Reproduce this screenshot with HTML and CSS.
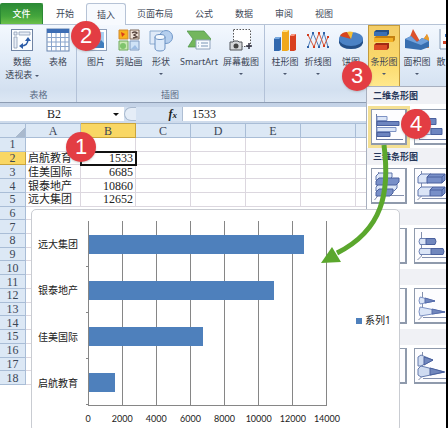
FILE: index.html
```html
<!DOCTYPE html>
<html lang="zh-CN">
<head>
<meta charset="utf-8">
<title>插入条形图</title>
<link rel="stylesheet" href="styles.css">
</head>
<body>
<div class="app">
  <nav class="tabs">
    <button class="tab file">文件</button>
    <button class="tab">开始</button>
    <button class="tab active">插入</button>
    <button class="tab wide">页面布局</button>
    <button class="tab">公式</button>
    <button class="tab">数据</button>
    <button class="tab">审阅</button>
    <button class="tab">视图</button>
  </nav>

  <section class="ribbon">
    <div class="group tables">
      <div class="tools">
        <button class="tool w42">
          <svg width="24" height="24" viewBox="0 0 24 24"><rect x="1.500" y="1.500" width="21" height="21" fill="#fbfdff" stroke="#7084a4"/><path d="M4 4h3v3H4zM9 4h11v3H9zM4 9h3v11H4z" fill="#e8eef7" stroke="#8d9cb5" stroke-width=".8"/><path d="M11 18c5 0 7-2 7-7" fill="none" stroke="#2b5ca8" stroke-width="1.500"/><path d="M15 13l3-4 3 4zM13 15l-4 3 4 3z" fill="#2b5ca8"/></svg>
          <span>数据<br>透视表 <i class="caret"></i></span>
        </button>
        <button class="tool w30">
          <svg width="24" height="24" viewBox="0 0 24 24"><rect x="1" y="1" width="22" height="22" fill="#fff" stroke="#6683ae"/><path d="M1 1h22v4H1z" fill="#3d6eb5"/><path d="M1 9.500h22M1 14h22M1 18.500h22M5.500 5v18M10 5v18M14.500 5v18M19 5v18" stroke="#8aa5cc"/></svg>
          <span>表格</span>
        </button>
      </div>
      <div class="caption">表格</div>
    </div>
    <div class="group pictures">
      <div class="tools">
        <button class="tool w32">
          <svg width="24" height="24" viewBox="0 0 24 24"><rect x="1.500" y="1.500" width="21" height="21" fill="#fff" stroke="#8fa0ba"/><path d="M4 4h16v16H4z" fill="#a9d1f4"/><path d="M4 20v-5l6-5 5 5 2-3 3 3v5z" fill="#3f7dbd"/></svg>
          <span>图片</span>
        </button>
        <button class="tool w34">
          <svg width="24" height="24" viewBox="0 0 24 24"><path d="M2 2h9v9H2z" fill="#f8b31d" stroke="#d28a31"/><path d="M4 4l4 2-3 3z" fill="#d83d1c"/><path d="M13 2h9v9h-9z" fill="#f2e6dc" stroke="#7d6654"/><path d="M15 5q3-2 5 0l-3 2 3 2-4 1" fill="none" stroke="#594740" stroke-width="1.500"/><path d="M2 13h9v9H2z" fill="#c9e8b3" stroke="#6fa95b"/><circle cx="6" cy="18" r="3" fill="#7fc46c"/><path d="M13 13h9v9h-9z" fill="#cfe3f7" stroke="#809bc0"/><path d="M14 21l4-4 3 4z" fill="#9dbde4"/></svg>
          <span>剪贴画</span>
        </button>
        <button class="tool w30">
          <svg width="24" height="24" viewBox="0 0 24 24"><path d="M1 3h13v13H1z" fill="#dfeaf8" stroke="#8daccf"/><circle cx="17" cy="9" r="6.500" fill="#b5cfee" stroke="#7299c9"/><path d="M6 9v11q0 3 5 3t5-3V9z" fill="#dceafa" stroke="#6b91c2"/><ellipse cx="11" cy="9" rx="5" ry="2.500" fill="#f5faff" stroke="#6b91c2"/></svg>
          <span>形状<i class="caret below"></i></span>
        </button>
        <button class="tool w46">
          <svg width="24" height="24" viewBox="0 0 24 24"><path d="M0 3h17l7 8-6 8H1l5-8z" fill="#73b65d" stroke="#4c9447" stroke-width=".7"/><path d="M9 12h14v9H9z" fill="#f7fbff" stroke="#91a4bd"/><path d="M11 15h1m2 0h7M11 18h1m2 0h7" stroke="#7995b5"/></svg>
          <span>SmartArt</span>
        </button>
        <button class="tool w38">
          <svg width="24" height="24" viewBox="0 0 24 24"><path d="M4.500 1.500h17v17h-17z" fill="#fff" stroke="#555" stroke-dasharray="1.500 1.500"/><path d="M20 15v6M17 18h6" stroke="#334" stroke-width="1.500"/><path d="M1 14h3l1-1h4l1 1h3v8H1z" fill="#d5d7da" stroke="#52565c"/><circle cx="7" cy="18" r="2.500" fill="#444"/></svg>
          <span>屏幕截图<i class="caret below"></i></span>
        </button>
      </div>
      <div class="caption">插图</div>
    </div>
    <div class="group charts">
      <div class="tools">
        <button class="tool w32">
          <svg width="24" height="24" viewBox="0 0 24 24"><path d="M1 11l2-2h5v13l-2 1H1z" fill="#3268ae"/><path d="M1 11l2-2h5l-2 2z" fill="#78a9df"/><path d="M9 4l2-2h5v20l-2 1H9z" fill="#f0a81b"/><path d="M9 4l2-2h5l-2 2z" fill="#ffe18a"/><path d="M17 8l2-2h4v16l-2 1h-4z" fill="#d9401f"/><path d="M17 8l2-2h4l-2 2z" fill="#f79780"/></svg>
          <span>柱形图<i class="caret below"></i></span>
        </button>
        <button class="tool w32">
          <svg width="24" height="24" viewBox="0 0 24 24"><path d="M2 19L7 5l6 14 5-14 4 14" fill="none" stroke="#4f7db9"/><path d="M2 7l6 12 5-14 5 13 4-9" fill="none" stroke="#d65a3b"/><path d="M1 18h2v2H1zM6 4h2v2H6zM12 18h2v2h-2zM17 4h2v2h-2zM21 18h2v2h-2z" fill="#2f62a7"/><path d="M1 6h2v2H1zM7 18h2v2H7zM12 4h2v2h-2zM17 17h2v2h-2zM21 8h2v2h-2z" fill="#d33c1d"/></svg>
          <span>折线图<i class="caret below"></i></span>
        </button>
        <button class="tool w32">
          <svg width="24" height="24" viewBox="0 0 24 24"><path d="M0 11v4q2 6 12 6t12-6v-4z" fill="#234f88"/><ellipse cx="12" cy="11" rx="12" ry="7" fill="#4b82c5"/><path d="M12 11L1 8q2-4 7-4z" fill="#d9441d"/><path d="M12 11L8 4q3-1 6-0z" fill="#f8bf32"/></svg>
          <span>饼图<i class="caret below"></i></span>
        </button>
        <button class="tool w32 selected">
          <svg width="24" height="24" viewBox="0 0 24 24"><path d="M2 4l2-2h13v4l-2 2H2z" fill="#254f86"/><path d="M2 4h13v4H2z" fill="#3b70b4"/><path d="M2 10l2-2h19v4l-2 2H2z" fill="#c58010"/><path d="M2 10h19v4H2z" fill="#f3b025"/><path d="M2 17l2-2h13v5l-2 2H2z" fill="#9f2815"/><path d="M2 17h13v5H2z" fill="#db4926"/></svg>
          <span>条形图<i class="caret below"></i></span>
        </button>
        <button class="tool w32">
          <svg width="24" height="24" viewBox="0 0 24 24"><path d="M1 19L8 1l8 14 6-9 2 14z" fill="#dc512c"/><path d="M15 16l7-10 2 4v10z" fill="#e89c2d"/><path d="M0 11l6-3 6 6 5-4 7 3v6l-8 3-16-2z" fill="#386eaf"/><path d="M0 11l6-3 6 6 5-4 7 3-8 4z" fill="#70a0da"/></svg>
          <span>面积图<i class="caret below"></i></span>
        </button>
        <button class="tool w32">
          <svg width="24" height="24" viewBox="0 0 24 24"><path d="M1 1v21h22V1z" fill="#fafdff"/><path d="M2 1v20h21" fill="none" stroke="#7890b1"/><path d="M5 13h3v3H5zM11 7h3v3h-3zM17 11h3v3h-3z" fill="#d24529"/><path d="M7 6h3v3H7zM11 15h3v3h-3z" fill="#3e73b8"/></svg>
          <span>散点图<i class="caret below"></i></span>
        </button>
      </div>
    </div>
  </section>

  <div class="formula-bar">
    <input class="name-box" aria-label="名称框" value="B2">
    <button class="name-arrow" aria-label="名称列表"><i class="caret big"></i></button>
    <div class="fx"><i class="knob"></i><b>f<small>x</small></b></div>
    <input class="formula" aria-label="编辑栏" value="1533">
  </div>

  <main class="sheet">
    <table>
      <colgroup><col class="rowhead"><col class="c"><col class="c"><col class="c"><col class="c"><col class="c"><col class="c"><col></colgroup>
      <thead><tr><th class="corner"></th><th>A</th><th class="on">B</th><th>C</th><th>D</th><th>E</th><th></th><th></th></tr></thead>
      <tbody>
        <tr><th>1</th><td></td><td></td><td></td><td></td><td></td><td></td><td></td></tr>
        <tr><th class="on">2</th><td>启航教育</td><td class="num current">1533</td><td></td><td></td><td></td><td></td><td></td></tr>
        <tr><th>3</th><td>佳美国际</td><td class="num">6685</td><td></td><td></td><td></td><td></td><td></td></tr>
        <tr><th>4</th><td>银泰地产</td><td class="num">10860</td><td></td><td></td><td></td><td></td><td></td></tr>
        <tr><th>5</th><td>远大集团</td><td class="num">12652</td><td></td><td></td><td></td><td></td><td></td></tr>
        <tr><th>6</th><td colspan="7"></td></tr>
        <tr><th>7</th><td colspan="7"></td></tr>
        <tr><th>8</th><td colspan="7"></td></tr>
        <tr><th>9</th><td colspan="7"></td></tr>
        <tr><th>10</th><td colspan="7"></td></tr>
        <tr><th>11</th><td colspan="7"></td></tr>
        <tr><th>12</th><td colspan="7"></td></tr>
        <tr><th>13</th><td colspan="7"></td></tr>
        <tr><th>14</th><td colspan="7"></td></tr>
        <tr><th>15</th><td colspan="7"></td></tr>
        <tr><th>16</th><td colspan="7"></td></tr>
        <tr><th>17</th><td colspan="7"></td></tr>
        <tr><th>18</th><td colspan="7"></td></tr>
      </tbody>
    </table>
  </main>

  <aside class="gallery">
    <h2>二维条形图</h2>
    <div class="tiles first">
      <button class="tile picked" aria-label="簇状条形图"><svg width="32" height="32" viewBox="0 0 32 32"><path d="M3.500 3v25M3 28.500h27" stroke="#6b7ba3"/><path d="M4 5.500h10v4H4zM4 16.500h19v4H4z" fill="#dbe5f7" stroke="#7d92c4"/><path d="M4 10.500h22v4H4zM4 21.500h13v4H4z" fill="#6d85c0" stroke="#4a609e"/></svg></button>
      <button class="tile" aria-label="堆积条形图"><svg width="32" height="32" viewBox="0 0 32 32"><path d="M3.500 3v25M3 28.500h27" stroke="#6b7ba3"/><path d="M4 7.500h9v6H4zM4 17.500h11v6H4z" fill="#dbe5f7" stroke="#7d92c4"/><path d="M13 7.500h7v6h-7zM15 17.500h11v6H15z" fill="#6d85c0" stroke="#4a609e"/></svg></button>
    </div>
    <h2>三维条形图</h2>
    <div class="tiles">
      <button class="tile" aria-label="三维簇状条形图"><svg width="32" height="32" viewBox="0 0 32 32"><path d="M5.500 2v23l-4 5M6 25.500h25" fill="none" stroke="#8490ae"/><path d="M3 6l3-3h13v4l-3 3H3zM3 17l3-3h18v4l-3 3H3z" fill="#dbe5f7" stroke="#5e75ab"/><path d="M3 11l3-3h20v4l-3 3H3zM3 22l3-3h14v4l-3 3H3z" fill="#788fc8" stroke="#4a609e"/></svg></button>
      <button class="tile" aria-label="三维堆积条形图"><svg width="32" height="32" viewBox="0 0 32 32"><path d="M5.500 1v25l-4 4M6 28.500h25" fill="none" stroke="#8490ae"/><path d="M2 7l3-3h10v6l-3 3H2zM2 20l3-3h12v6l-3 3H2z" fill="#dbe5f7" stroke="#5e75ab"/><path d="M11 7l3-3h15v6l-3 3H11zM14 20l3-3h12v6l-3 3H14z" fill="#788fc8" stroke="#4a609e"/><path d="M11 7h15l3-3M26 7v6M14 20h12l3-3M26 20v6" fill="none" stroke="#4a609e"/></svg></button>
    </div>
    <div class="band"></div>
    <div class="tiles">
      <button class="tile" aria-label="簇状水平圆柱图"></button>
      <button class="tile" aria-label="堆积水平圆柱图"><svg width="32" height="32" viewBox="0 0 32 32"><path d="M5.500 2v24l-4 4M6 27.500h25" fill="none" stroke="#8490ae"/><path d="M4 8.500h8v6H4q-2-3 0-6zM4 18.500h12v6H4q-2-3 0-6z" fill="#dbe5f7" stroke="#6e82b4"/><path d="M10 8.500h9q2 3 0 6h-9zM15 18.500h12q2 3 0 6H15z" fill="#7187bd" stroke="#4a609e"/></svg></button>
    </div>
    <div class="band"></div>
    <div class="tiles">
      <button class="tile" aria-label="簇状水平圆锥图"></button>
      <button class="tile" aria-label="堆积水平圆锥图"><svg width="32" height="32" viewBox="0 0 32 32"><path d="M6.500 2v24l-4 4M7 27.500h24" fill="none" stroke="#8490ae"/><path d="M4 7l15 4-15 3q-2-3 0-7zM4 17l25 5-25 4q-2-4 0-9z" fill="#dbe5f7" stroke="#7d92c4"/><path d="M9 8l10 3-10 2zM16 19l13 3-13 2z" fill="#7187bd" stroke="#566cab"/></svg></button>
    </div>
    <div class="band"></div>
    <div class="tiles">
      <button class="tile" aria-label="簇状水平棱锥图"></button>
      <button class="tile" aria-label="堆积水平棱锥图"><svg width="32" height="32" viewBox="0 0 32 32"><path d="M6.500 2v24l-4 4M7 28.500h24" fill="none" stroke="#8490ae"/><path d="M2 7l3-2 12 5-12 6H2zM2 19l3-3 24 6-24 5-3-2z" fill="#cfdbf1" stroke="#667cae"/><path d="M8 7l9 3-9 5zM14 18l14 4-14 3z" fill="#7187bd" stroke="#4a609e"/></svg></button>
    </div>
  </aside>

  <figure class="chart">
    <div class="plot-row">
      <div class="names"><span>远大集团</span><span>银泰地产</span><span>佳美国际</span><span>启航教育</span></div>
      <div class="plot">
        <div class="lines"><i></i><i></i><i></i><i></i><i></i><i></i><i></i></div>
        <div class="bars">
          <div><b style="width:90.4%"></b></div>
          <div><b style="width:77.6%"></b></div>
          <div><b style="width:47.8%"></b></div>
          <div><b style="width:11%"></b></div>
        </div>
      </div>
      <figcaption><i></i>系列1</figcaption>
    </div>
    <div class="axis"><span>0</span><span>2000</span><span>4000</span><span>6000</span><span>8000</span><span>10000</span><span>12000</span><span>14000</span></div>
  </figure>

  <svg class="arrow" width="80" height="124" viewBox="0 0 80 124" aria-hidden="true"><path d="M65 1C71 48 64 86 18 109" fill="none" stroke="#5ba72d" stroke-width="5"/><path d="M2 119L13 103l9 15z" fill="#5ba72d"/></svg>
  <span class="callout one">1</span>
  <span class="callout two">2</span>
  <span class="callout three">3</span>
  <span class="callout four">4</span>
</div>
</body>
</html>
```
FILE: styles.css
```css
* { box-sizing: border-box; }

body {
  margin: 0;
  background: #fff;
  color: #3c4656;
  font: 9px/13px "Noto Sans", "Noto Sans CJK SC", sans-serif;
}

button, input {
  margin: 0;
  padding: 0;
  border: 0;
  border-radius: 0;
  background: none;
  color: inherit;
  font: inherit;
}

.app {
  position: relative;
  min-height: 100vh;
  overflow: hidden;
  border-right: 2px solid #000;
}

/* Tabs */
.tabs {
  display: flex;
  height: 24px;
  padding-top: 3px;
}
.tab { width: 40px; padding-bottom: 1px; }
.tab.file {
  width: 43px;
  margin-right: 2px;
  border: 1px solid #2c8a35;
  border-bottom: 0;
  border-radius: 2px 2px 0 0;
  background: linear-gradient(#2c8b36, #43a53c 60%, #6cc04a);
  color: #fff;
  font-weight: 500;
}
.tab.active {
  position: relative;
  height: 22px;
  margin-left: 1px;
  border: 1px solid #b6c3d6;
  border-bottom: 0;
  border-radius: 3px 3px 0 0;
  background: #f7fafe;
}
.tab.wide { width: 58px; }

/* Ribbon */
.ribbon {
  display: flex;
  height: 79px;
  border-top: 1px solid #b6c3d6;
  border-bottom: 1px solid #8e9db3;
  background: linear-gradient(#f3f8fe, #e2ecf8 45%, #d3e0f0 85%, #dce7f4);
}
.group {
  display: flex;
  flex: none;
  flex-direction: column;
  justify-content: space-between;
  border-right: 1px solid #b3c2d8;
}
.tables { width: 77px; padding-left: 1px; }
.pictures { width: 188px; padding-left: 3px; }
.charts { flex: 1 0 0; min-width: 0; padding-left: 4px; border: 0; }
.tools { display: flex; }
.tool {
  display: flex;
  flex: none;
  flex-direction: column;
  align-items: center;
  height: 62px;
  padding-top: 3px;
  gap: 3px;
  line-height: 13px;
  white-space: nowrap;
}
.w30 { width: 30px; }
.w32 { width: 32px; }
.w34 { width: 34px; }
.w38 { width: 38px; }
.w42 { width: 42px; }
.w46 { width: 46px; }
.charts .tool { margin-right: 1px; }
.selected {
  border: 1px solid #c39a3c;
  padding-top: 2px;
  background: linear-gradient(#f3cd67, #fbd96b 60%, #ffe88c);
}
.caption { padding-bottom: 1px; color: #5a6b85; text-align: center; }
.pictures .caption { padding-right: 4px; }

.caret {
  display: inline-block;
  border: 2px solid transparent;
  border-top-color: #4c5870;
  border-bottom: 0;
  vertical-align: middle;
}
.caret.below { display: block; width: 4px; margin: 5px auto 0; }
.caret.big { border-width: 3px 3px 0; border-top-color: #111; }

/* Formula bar */
.formula-bar {
  display: flex;
  height: 20px;
  padding: 4px 0 2px;
  background: linear-gradient(#c3d2e6, #cfdcec);
  color: #222;
  font: 12px/14px "Liberation Serif", "Noto Sans CJK SC", serif;
}
.name-box { width: 108px; background: #fff; text-align: center; }
.name-arrow { display: flex; width: 16px; align-items: center; justify-content: center; background: #fff; }
.fx {
  display: flex;
  width: 59px;
  align-items: center;
  justify-content: space-between;
  padding-right: 5px;
  border-right: 1px solid #aebed3;
  background: #d5e2f2;
  font-style: italic;
}
.fx small { font-size: 9px; }
.knob {
  width: 12px;
  height: 14px;
  border: 1px solid #a9b9ce;
  border-right: 0;
  border-radius: 8px 0 0 8px;
  background: #e5edf7;
}
.formula { flex: 1; min-width: 0; padding-left: 9px; background: #fff; }

/* Worksheet */
.sheet table {
  width: 100%;
  height: 262px;
  border-collapse: separate;
  border-spacing: 0;
  table-layout: fixed;
  color: #222;
  font: 12px/12px "Liberation Serif", "Noto Sans CJK SC", serif;
}
.rowhead { width: 26px; }
.c { width: 55px; }
.sheet th, .sheet td {
  padding: 0;
  border-right: 1px solid #dcd7df;
  border-bottom: 1px solid #dcd7df;
}
.sheet th {
  border-color: #a9bdd6;
  background: #dce8f5;
  color: #3b4655;
  font-weight: normal;
}
.sheet thead th { height: 15px; border-top: 1px solid #a9bdd6; }
.sheet th.on { border-color: #c9a43c; background: #f9d764; }
.sheet th.corner { background: linear-gradient(135deg, #dce8f5 75%, #a9b9cd 75%); }
.sheet td { padding-left: 2px; font-size: 11px; white-space: nowrap; }
.sheet td.num { padding-right: 2px; font-size: 12px; text-align: right; }
.sheet td.current { outline: 2px solid #111; outline-offset: -1px; }

/* Chart type menu */
.gallery {
  position: absolute;
  top: 86px;
  right: 0;
  bottom: 0;
  left: 366px;
  overflow: hidden;
  border-left: 1px solid #a8b0bf;
  border-top: 1px solid #a8b0bf;
  background: #fff;
}
.gallery h2 {
  height: 17px;
  margin: 0;
  padding-left: 6px;
  background: #f0f1f5;
  color: #26375a;
  font-size: 9px;
  font-weight: bold;
  line-height: 18px;
}
.tiles { display: flex; gap: 7px; padding: 3px 0 5px 4px; }
.tiles.first { padding: 5px 0 3px 4px; }
.tile {
  display: flex;
  flex: none;
  width: 36px;
  height: 36px;
  align-items: center;
  justify-content: center;
  border: 1px solid #8f9aac;
  border-width: 1px 2px 2px 1px;
  background: #fdfdff;
}
.picked { outline: 3px solid #f4e093; }
.band { height: 16px; background: #f0f1f5; }

/* Embedded chart */
.chart {
  position: absolute;
  top: 209px;
  right: 46px;
  bottom: -4px;
  left: 31px;
  margin: 0;
  padding-top: 11px;
  border: 1px solid #c9ccd2;
  border-radius: 5px;
  background: #fff;
  color: #222;
}
.plot-row { display: flex; height: 185px; }
.names { display: grid; width: 56px; padding-left: 6px; font-size: 10px; }
.names span { align-self: center; line-height: 14px; }
.plot {
  position: relative;
  flex: 1;
  border-bottom: 1px solid #868686;
  border-left: 1px solid #868686;
}
.lines { display: grid; height: 184px; grid-template-columns: repeat(7, 1fr); }
.lines i { border-right: 1px solid #868686; }
.bars { position: absolute; inset: 0; display: grid; }
.bars div { display: flex; align-items: center; }
.bars div::before { width: 3px; margin-left: -3px; align-self: end; border-bottom: 1px solid #868686; content: ""; }
.bars b { height: 19px; background: #4e80bc; }
.plot-row figcaption {
  display: flex;
  width: 72px;
  align-items: center;
  gap: 3px;
  padding: 14px 0 0 29px;
  font-size: 10px;
  white-space: nowrap;
}
figcaption i { width: 6px; height: 6px; background: #4e80bc; }
.axis {
  display: grid;
  grid-template-columns: repeat(8, 1fr);
  margin: 6px 55px 0 39px;
  font: 9px/14px Lato, sans-serif;
  text-align: center;
}

/* Step markers */
.arrow { position: absolute; top: 144px; left: 319px; }
.callout {
  position: absolute;
  width: 30px;
  height: 30px;
  border-radius: 50%;
  background: #e33d43;
  box-shadow: 0 1px 2px #8886;
  color: #fff;
  font: 22px/30px "Liberation Sans", sans-serif;
  text-align: center;
}
.one { top: 132px; left: 66px; }
.two { top: 21px; left: 71px; }
.three { top: 61px; left: 342px; }
.four { top: 109px; left: 401px; }
```
